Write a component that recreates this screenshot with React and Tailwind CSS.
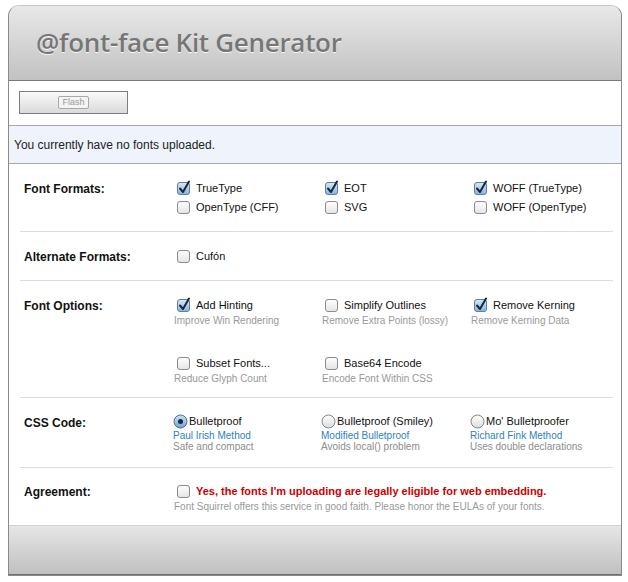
import React from 'react';

const font = { fontFamily: '"Liberation Sans", Arial, Helvetica, sans-serif' };

function Box({ checked }) {
    return (
        <svg width="15" height="15" viewBox="0 0 15 15" className="shrink-0 overflow-visible">
            <defs>
                <linearGradient id="cbOff" x1="0" y1="0" x2="0" y2="1">
                    <stop offset="0" stopColor="#ffffff" />
                    <stop offset="1" stopColor="#e4e4e4" />
                </linearGradient>
                <linearGradient id="cbOn" x1="0" y1="0" x2="0" y2="1">
                    <stop offset="0" stopColor="#d6e8fa" />
                    <stop offset="1" stopColor="#86b3e3" />
                </linearGradient>
            </defs>
            <rect x="1.5" y="1.5" width="12" height="12" rx="2.5" fill={checked ? 'url(#cbOn)' : 'url(#cbOff)'} stroke={checked ? '#5d7ea6' : '#8c8c8c'} />
            {checked && <path d="M4 7.5 L7 11 L13 0.5" fill="none" stroke="#1d2633" strokeWidth="2" strokeLinecap="round" strokeLinejoin="round" />}
        </svg>
    );
}

function Radio({ checked }) {
    return (
        <svg width="15" height="15" viewBox="0 0 15 15" className="shrink-0">
            <defs>
                <linearGradient id="rOff" x1="0" y1="0" x2="0" y2="1">
                    <stop offset="0" stopColor="#ffffff" />
                    <stop offset="1" stopColor="#dcdcdc" />
                </linearGradient>
                <linearGradient id="rOn" x1="0" y1="0" x2="0" y2="1">
                    <stop offset="0" stopColor="#cfe3f8" />
                    <stop offset="1" stopColor="#6fa2dc" />
                </linearGradient>
            </defs>
            <circle cx="7.5" cy="7.5" r="6.5" fill={checked ? 'url(#rOn)' : 'url(#rOff)'} stroke={checked ? '#4d6e96' : '#858585'} />
            {checked && <circle cx="7.5" cy="7.5" r="2.5" fill="#1b2a3e" />}
        </svg>
    );
}

function Check({ checked, label }) {
    return (
        <div className="h-[19px] flex items-center gap-[5px] text-[11px] text-[#111]">
            <Box checked={checked} />
            <span>{label}</span>
        </div>
    );
}

function Option({ checked, label, sub }) {
    return (
        <div>
            <Check checked={checked} label={label} />
            <div className="h-[12px] leading-[12px] -ml-[2px] text-[10px] text-[#999]">{sub}</div>
        </div>
    );
}

function CssChoice({ checked, label, link, sub }) {
    return (
        <div className="-ml-[3px]">
            <div className="h-[17px] flex items-center gap-[1px] text-[11px] text-[#111]">
                <Radio checked={checked} />
                <span>{label}</span>
            </div>
            <div className="h-[11px] leading-[11px] text-[10px] text-[#2f7fc0]">{link}</div>
            <div className="h-[11px] leading-[11px] text-[10px] text-[#8c8c8c]">{sub}</div>
        </div>
    );
}

function Section({ label, children, className }) {
    return (
        <div className={`ml-[11px] mr-[8px] flex ${className}`}>
            <div className="w-[154px] pl-[4px] h-[19px] flex items-center text-[12px] font-bold text-[#111]">{label}</div>
            <div className="flex-1 pl-[2px]">{children}</div>
        </div>
    );
}

export default function App() {
    return (
        <div className="bg-white w-[628px] h-[582px] pt-[5px] pl-[8px]" style={font}>
            <div className="w-[614px] border border-[#8a8a8a] border-t-[#c8c8c8] rounded-t-[11px] overflow-hidden bg-white">
                <div className="h-[75px] bg-linear-to-b from-[#e8e8e8] to-[#c2c2c2] border-b border-[#7a7a7a] pl-[27px] pt-[18px]">
                    <h1
                        className="text-[26px] leading-[36px] font-semibold tracking-[-0.3px] text-[#767676] [text-shadow:0_1px_0_rgba(255,255,255,0.85)]"
                        style={{ fontFamily: '"Open Sans", "Liberation Sans", sans-serif' }}
                    >
                        @font-face Kit Generator
                    </h1>
                </div>

                <div className="h-[44px] pt-[10px] pl-[10px]">
                    <div className="w-[109px] h-[23px] border border-[#7d7d7d] bg-linear-to-b from-[#fafafa] to-[#dadada] flex items-center justify-center">
                        <span className="border border-[#a8a8a8] bg-[#f4f4f4] rounded-[2px] px-[3px] h-[13px] leading-[11px] text-[9px] text-[#999]">Flash</span>
                    </div>
                </div>

                <div className="h-[39px] bg-[#eef3fc] border-y border-[#a9a9a9] flex items-center pl-[5px] text-[12px] text-[#222]">
                    You currently have no fonts uploaded.
                </div>

                <Section label="Font Formats:" className="pt-[15px] pb-[14px] border-b border-[#dcdcdc]">
                    <div className="grid grid-cols-[148px_149px_140px]">
                        <Check checked label="TrueType" />
                        <Check checked label="EOT" />
                        <Check checked label="WOFF (TrueType)" />
                        <Check label="OpenType (CFF)" />
                        <Check label="SVG" />
                        <Check label="WOFF (OpenType)" />
                    </div>
                </Section>

                <Section label="Alternate Formats:" className="pt-[15px] pb-[14px] border-b border-[#dcdcdc]">
                    <Check label="Cufón" />
                </Section>

                <Section label="Font Options:" className="pt-[15px] pb-[12px] border-b border-[#dcdcdc]">
                    <div className="grid grid-cols-[148px_149px_140px] gap-y-[27px]">
                        <Option checked label="Add Hinting" sub="Improve Win Rendering" />
                        <Option label="Simplify Outlines" sub="Remove Extra Points (lossy)" />
                        <Option checked label="Remove Kerning" sub="Remove Kerning Data" />
                        <Option label="Subset Fonts..." sub="Reduce Glyph Count" />
                        <Option label="Base64 Encode" sub="Encode Font Within CSS" />
                    </div>
                </Section>

                <Section label="CSS Code:" className="pt-[15px] pb-[15px] border-b border-[#dcdcdc]">
                    <div className="grid grid-cols-[148px_149px_140px]">
                        <CssChoice checked label="Bulletproof" link="Paul Irish Method" sub="Safe and compact" />
                        <CssChoice label="Bulletproof (Smiley)" link="Modified Bulletproof" sub="Avoids local() problem" />
                        <CssChoice label="Mo' Bulletproofer" link="Richard Fink Method" sub="Uses double declarations" />
                    </div>
                </Section>

                <Section label="Agreement:" className="pt-[14px] pb-[12px]">
                    <div className="h-[19px] flex items-center gap-[5px] text-[11px] font-bold text-[#cc0000]">
                        <Box />
                        <span>Yes, the fonts I'm uploading are legally eligible for web embedding.</span>
                    </div>
                    <div className="h-[12px] leading-[12px] -ml-[2px] text-[10px] text-[#999]">
                        Font Squirrel offers this service in good faith. Please honor the EULAs of your fonts.
                    </div>
                </Section>

                <div className="h-[50px] bg-linear-to-b from-[#e6e6e6] to-[#c0c0c0] border-t border-[#cfcfcf] border-b border-b-[#6e6e6e]" />
            </div>
        </div>
    );
}
